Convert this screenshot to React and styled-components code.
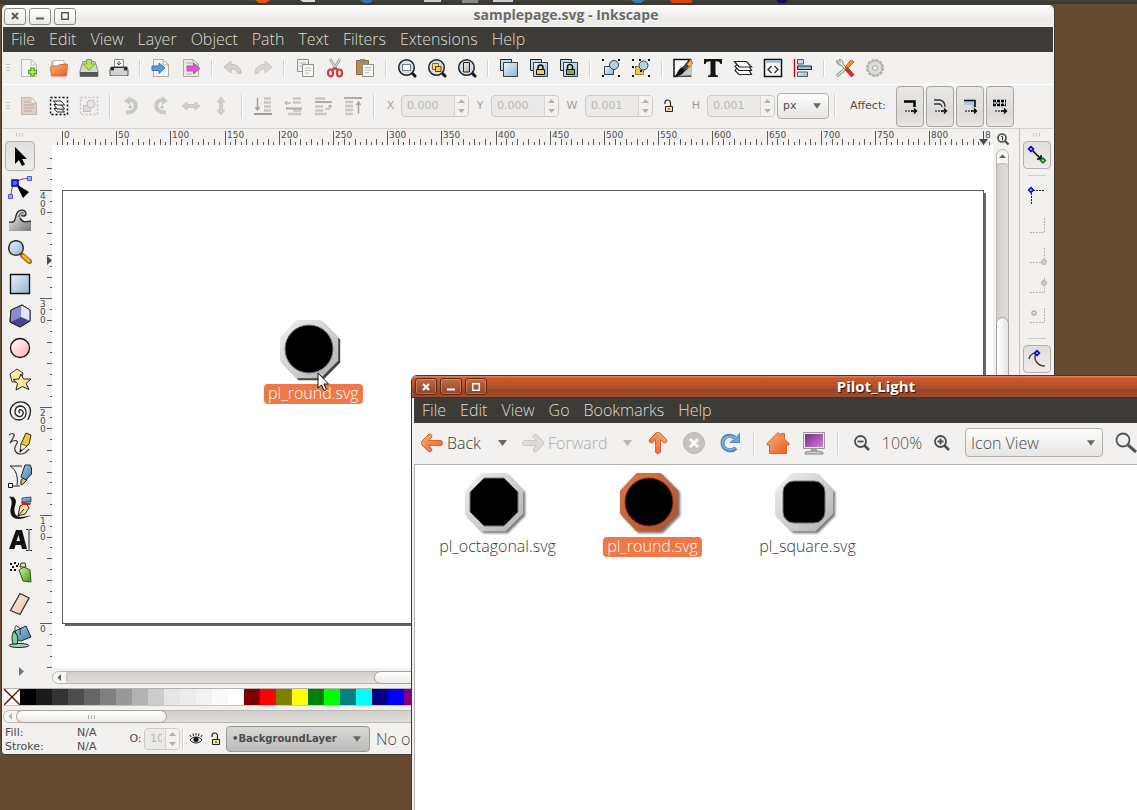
import React from "react";
import styled, { createGlobalStyle, css } from "styled-components";

const UI = `"Open Sans", "Noto Sans", sans-serif`;
const SMALL = `"DejaVu Sans", "Noto Sans", sans-serif`;

const Global = createGlobalStyle`
  *, *::before, *::after { box-sizing: border-box; }
  html, body, #root { height: 100%; }
  body { margin: 0; overflow: hidden; background: #654a32; font-family: ${UI}; color: #4c4c4c; }
  button, input, select { font: inherit; color: inherit; margin: 0; }
  svg { display: block; flex: none; }
`;

/* ---------- desktop ---------- */
const Desktop = styled.div`
  position: relative;
  height: 100vh;
  overflow: hidden;
  background: #654a32;
`;
const TopPanel = styled.header`
  height: 4px;
  overflow: hidden;
  background: linear-gradient(#44433e, #35342f);
`;
const HiddenDefs = styled.svg`
  position: absolute;
  width: 0;
  height: 0;
`;

/* ---------- windows ---------- */
const Window = styled.section`
  position: absolute;
  display: flex;
  flex-direction: column;
  background: #f2f1f0;
  border: 1px solid #3c3b37;
`;
const EditorWindow = styled(Window)`
  top: 4px;
  left: 1px;
  right: 82px;
  bottom: 55px;
  padding: 0 1px;
  border-radius: 6px 6px 4px 4px;
`;
const FilesWindow = styled(Window)`
  top: 375px;
  left: 411px;
  right: -126px;
  bottom: -40px;
  border-radius: 6px 6px 0 0;
`;
const TitleBar = styled.div`
  flex: none;
  display: flex;
  align-items: center;
  gap: 3px;
  height: 22px;
  padding-left: 1px;
  border-radius: 5px 5px 0 0;
  background: ${(p) => (p.$active
    ? "linear-gradient(#e98a61 0, #d2592c 2px, #a8502d 60%, #94452a 60%, #a34c2a)"
    : "linear-gradient(#fdfdfc, #efeeec 55%, #ebeae8 60%, #f0efed)")};
  ${(p) => p.$active && css`padding-left: 3px; border-bottom: 1px solid #5a2a17;`}
`;
const TitleButton = styled.button`
  display: grid;
  place-items: center;
  width: 22px;
  height: 17px;
  padding: 0;
  border-radius: 3px;
  border: 1px solid ${(p) => (p.$active ? "#5c2a16" : "#8b8a87")};
  background: ${(p) => (p.$active ? "linear-gradient(#c36a47, #8e4428)" : "linear-gradient(#fff, #ebeae8)")};
  color: ${(p) => (p.$active ? "#fff" : "#5c5b58")};
  box-shadow: inset 0 0 0 1px ${(p) => (p.$active ? "rgba(255,190,160,.35)" : "transparent")};
`;
const Title = styled.h1`
  flex: 1;
  margin: 0;
  padding-bottom: 2px;
  text-align: center;
  font: 700 ${(p) => (p.$active ? "15px" : "14px")}/20px ${UI};
  color: ${(p) => (p.$active ? "#fff" : "#6b6a67")};
  text-shadow: ${(p) => (p.$active ? "1px 1px 1px #2b1309" : "0 1px 0 #fff")};
`;
const MenuBar = styled.nav`
  flex: none;
  display: flex;
  align-items: center;
  gap: 14px;
  height: 25px;
  margin-left: ${(p) => p.$inset || "0"};
  padding-left: 8px;
  background: #3c3b37;
`;
const MenuItem = styled.button`
  padding: 0 0 2px;
  border: 0;
  background: none;
  color: #dfdbd2;
  font: 300 16px/22px ${UI};
`;

/* ---------- toolbars ---------- */
const CommandBar = styled.div`
  flex: none;
  display: flex;
  align-items: center;
  height: 33px;
  border-bottom: 1px solid #fff;
`;
const ControlBar = styled.div`
  flex: none;
  display: flex;
  align-items: center;
  height: 44px;
  padding-bottom: 1px;
  border-bottom: 1px solid #d5d1cd;
  font: 11px/14px ${SMALL};
`;
const Grip = styled.span`
  flex: none;
  width: ${(p) => (p.$vertical ? "8px" : "11px")};
  height: ${(p) => (p.$vertical ? "12px" : "8px")};
  background: ${(p) => (p.$vertical
    ? "repeating-linear-gradient(90deg, #c9c6c2 0 1px, transparent 1px 3px) center / 8px 4px no-repeat"
    : "repeating-linear-gradient(#c9c6c2 0 1px, transparent 1px 3px) 3px center / 4px 8px no-repeat")};
`;
const IconButton = styled.button`
  display: grid;
  place-items: center;
  flex: none;
  width: 30px;
  height: 30px;
  padding: 0;
  border: 0;
  background: none;
`;
const LockButton = styled(IconButton)`
  width: 32px;
`;
const Separator = styled.span`
  flex: none;
  width: ${(p) => (p.$narrow ? "6px" : "12px")};
  height: ${(p) => (p.$tall ? "24px" : "17px")};
  background: linear-gradient(90deg, #d6d3cf 1px, #fff 1px) center / 2px 100% no-repeat;
`;
const FieldLabel = styled.label`
  width: ${(p) => p.$w || "28px"};
  text-align: center;
  color: ${(p) => (p.$strong ? "#4c4c4c" : "#a3a09c")};
`;
const Spin = styled.span`
  display: flex;
  flex: none;
  width: ${(p) => p.$w || "68px"};
  height: 22px;
  border: 1px solid #cfccc8;
  border-radius: 4px;
  overflow: hidden;
  background: #ebeae8;
`;
const SpinInput = styled.input`
  flex: 1;
  min-width: 0;
  padding: 0 3px 0 5px;
  border: 0;
  border-right: 1px solid #d8d5d1;
  background: transparent;
  color: #bbb8b4;
`;
const SpinArrows = styled.span`
  display: grid;
  place-items: center;
  width: 13px;
  background: #f3f2f1;
`;
const SelectBox = styled.span`
  display: grid;
  align-items: center;
  flex: none;
  width: ${(p) => p.$w};
  height: ${(p) => p.$h};
  margin-left: ${(p) => p.$before || "0"};
  border: 1px solid ${(p) => (p.$dark ? "#9b9996" : "#b4b1ad")};
  border-radius: 4px;
  background: ${(p) => (p.$dark ? "linear-gradient(#d8d8d7, #bdbcbb)" : "linear-gradient(#fdfdfd, #e6e5e3)")};
  & > * { grid-area: 1 / 1; }
  & > svg { justify-self: end; margin-right: ${(p) => (p.$dark ? "8px" : "7px")}; pointer-events: none; }
`;
const Select = styled.select`
  appearance: none;
  width: 100%;
  height: 100%;
  padding: 0 0 0 5px;
  border: 0;
  background: none;
`;
const LayerSelect = styled(Select)`
  font: 800 10px/14px ${SMALL};
`;
const AffectLabel = styled.span`
  margin: 0 10px 0 9px;
`;
const AffectGroup = styled.div`
  display: flex;
  gap: 2px;
`;
const AffectButton = styled.button`
  display: grid;
  place-items: center;
  width: 28px;
  height: 41px;
  padding: 0;
  border: 1px solid #a8a5a1;
  border-radius: 4px;
  background: linear-gradient(#e9e8e6, #dddbd9 70%, #e8e7e5);
`;

/* ---------- editor body ---------- */
const EditorBody = styled.div`
  flex: 1;
  min-height: 0;
  display: grid;
  grid-template-columns: 37px 1fr 34px;
`;
const Column = styled.div`
  display: flex;
  flex-direction: column;
  align-items: center;
  min-height: 0;
`;
const ToolColumn = styled(Column)`
  padding-right: 4px;
`;
const ToolButton = styled.button`
  display: grid;
  place-items: center;
  flex: none;
  width: 30px;
  height: 30px;
  margin-bottom: 2px;
  padding: 0;
  border: 1px solid ${(p) => (p.$on ? "#b3b0ac" : "transparent")};
  border-radius: 4px;
  background: ${(p) => (p.$on ? "linear-gradient(#e0dfdd, #eeedec)" : "none")};
`;
const Expander = styled(ToolButton)`
  align-items: center;
  height: 38px;
`;
const SnapColumn = styled(Column)`
  border-left: 1px solid #c4c1bd;
`;
const SnapButton = styled(ToolButton)`
  width: 28px;
  height: ${(p) => (p.$on ? "28px" : "30px")};
  margin: 0;
`;
const SnapRule = styled.span`
  flex: none;
  width: 18px;
  height: ${(p) => p.$h};
  background: linear-gradient(#d0cdc9, #d0cdc9) center / 100% 1px no-repeat;
`;
const CanvasGrid = styled.div`
  display: grid;
  min-height: 0;
  grid-template-columns: 12px 1fr 26px;
  grid-template-rows: 16px 1fr 20px;
`;
const TopRuler = styled.svg`
  grid-area: 1 / 1 / 2 / 3;
  width: 100%;
  height: 16px;
`;
const SideRuler = styled.svg`
  grid-area: 2 / 1;
  width: 12px;
  height: 100%;
`;
const Canvas = styled.div`
  grid-area: 2 / 2;
  display: grid;
  padding: 45px 9px 44px 10px;
  background: #fff;
`;
const Page = styled.div`
  border: 1px solid #5a5a5a;
  background: #fff;
  box-shadow: 3px 3px 0 -1px #666, 2px 2px 0 #666;
  clip-path: polygon(0 0, 100% 0, 100% 3px, calc(100% + 3px) 3px, calc(100% + 3px) calc(100% + 3px), 3px calc(100% + 3px), 3px 100%, 0 100%);
`;
const ZoomCorner = styled.div`
  grid-area: 1 / 3;
  display: grid;
  place-items: center;
  padding: 4px 6px 0 0;
`;
const VScroll = styled.div`
  grid-area: 2 / 3;
  display: flex;
  flex-direction: column;
  width: 13px;
  margin: 4px 0 0 3px;
  border: 1px solid #bab7b3;
  border-radius: 7px 7px 0 0;
  background: linear-gradient(90deg, #d3d0cc, #e0dedb);
`;
const HScroll = styled.div`
  display: flex;
  height: 13px;
  border: 1px solid #bab7b3;
  border-radius: 7px 0 0 7px;
  background: linear-gradient(#d3d0cc, #e0dedb);
`;
const CanvasHScroll = styled(HScroll)`
  grid-area: 3 / 2 / 4 / 4;
  margin-top: 3px;
`;
const ScrollCap = styled.button`
  display: grid;
  place-items: center;
  flex: none;
  width: ${(p) => (p.$vertical ? "11px" : "13px")};
  height: ${(p) => (p.$vertical ? "13px" : "11px")};
  padding: 0;
  border: 0;
  border-radius: ${(p) => (p.$vertical ? "6px 6px 0 0" : "6px 0 0 6px")};
  background: #f7f6f5;
  color: ${(p) => (p.$dim ? "#b3b0ac" : "#5f5e5b")};
`;
const Trough = styled.span`
  flex: none;
  border: 0 solid #bab7b3;
  ${(p) => (p.$vertical
    ? css`height: 155px; border-top-width: 1px; border-radius: 6px 6px 0 0;`
    : css`width: 309px; border-left-width: 1px; border-radius: 6px 0 0 6px;`)}
`;
const Thumb = styled.span`
  display: grid;
  place-items: center;
  flex: ${(p) => (p.$size ? `0 0 ${p.$size}` : "1")};
  margin: -1px;
  border: 1px solid #a5a29e;
  border-radius: 7px;
  background: ${(p) => (p.$vertical ? "linear-gradient(90deg, #fff, #e6e5e3)" : "linear-gradient(#fff, #ebeae8)")};
`;

/* ---------- palette and status ---------- */
const Palette = styled.div`
  flex: none;
  display: flex;
  height: 18px;
  padding-left: 1px;
  border-top: 1px solid #b5b2ae;
  border-bottom: 1px solid #c8c5c1;
  overflow: hidden;
`;
const Swatch = styled.button`
  flex: none;
  width: 16px;
  height: 16px;
  padding: 0;
  border: 0;
  background: ${(p) => p.$c};
`;
const PaletteScroll = styled(HScroll)`
  flex: none;
  margin: 4px 0 1px;
`;
const StatusBar = styled.div`
  flex: none;
  display: flex;
  align-items: center;
  height: 30px;
  padding-left: 2px;
  font: 11px/14px ${SMALL};
`;
const StyleInfo = styled.dl`
  display: grid;
  grid-template-columns: 72px 50px;
  margin: 0;
  padding-top: 1px;
`;
const StyleName = styled.dt``;
const StyleValue = styled.dd`
  margin: 0;
`;
const StatusIcon = styled.button`
  display: grid;
  place-items: center;
  width: 20px;
  height: 20px;
  padding: 0;
  border: 0;
  background: none;
`;
const StatusText = styled.span`
  margin-left: 6px;
  font: 300 16px/20px ${UI};
  white-space: nowrap;
`;

/* ---------- file manager ---------- */
const FilesBody = styled.div`
  flex: 1;
  display: flex;
  flex-direction: column;
  margin-left: 2px;
`;
const FilesToolbar = styled.div`
  flex: none;
  display: flex;
  align-items: center;
  height: 41px;
  padding: 0 0 2px 7px;
  font: 300 16px/20px ${UI};
`;
const NavButton = styled.button`
  display: flex;
  align-items: center;
  gap: 4px;
  width: ${(p) => p.$w};
  padding: 0;
  border: 0;
  background: none;
  color: ${(p) => (p.disabled ? "#aeaba7" : "#3c3b37")};
`;
const DropButton = styled.button`
  display: grid;
  place-items: center;
  width: 22px;
  height: 30px;
  margin-right: ${(p) => (p.disabled ? "2px" : "9px")};
  padding: 0;
  border: 0;
  background: none;
`;
const WideIconButton = styled(IconButton)`
  width: 36px;
`;
const ZoomValue = styled.span`
  width: 44px;
  text-align: center;
`;
const SearchButton = styled(IconButton)`
  margin-left: 8px;
`;
const IconPane = styled.ul`
  flex: 1;
  display: grid;
  grid-template-columns: repeat(auto-fill, 155px);
  align-content: start;
  margin: 0;
  padding: 8px 0 0 5px;
  list-style: none;
  border: solid #b5b2ae;
  border-width: 1px 0 0 1px;
  background: #fff;
`;
const FileItem = styled.li`
  display: flex;
  flex-direction: column;
  align-items: center;
`;
const FileName = styled.span`
  padding: 0 4px 2px;
  border-radius: 4px;
  font: 300 16px/18px ${UI};
  color: ${(p) => (p.$on ? "#fff" : "#3c3b37")};
  background: ${(p) => (p.$on ? "#f07746" : "transparent")};
`;
const DraggedFile = styled.div`
  position: absolute;
  left: 264px;
  top: 320px;
  display: flex;
  flex-direction: column;
  align-items: center;
`;
const Pointer = styled.svg`
  position: absolute;
  left: 317px;
  top: 372px;
`;

/* ---------- drawings ---------- */
const Defs = () => (
  <HiddenDefs aria-hidden="true">
    <defs>
      {[
        ["blue", "#eef5fb", "#8fb2d3"], ["pink", "#fff", "#fbaab4"], ["orange", "#f9b47c", "#e8591c"],
        ["yellow", "#fff7c4", "#f4e27a"], ["silver", "#f2f2f2", "#b0b0b0"], ["copper", "#e0774a", "#a9502c"],
        ["gray", "#f4f4f4", "#777"], ["purple", "#7a2b8c", "#d07ad8"], ["steel", "#a8cbe4", "#3f7db3"],
        ["green", "#d7f5a8", "#3e9413"], ["skin", "#fdeee8", "#f6bfa8"],
      ].map(([id, a, b]) => (
        <linearGradient key={id} id={id} x1="0" y1="0" x2="1" y2="1">
          <stop offset="0" stopColor={a} /><stop offset="1" stopColor={b} />
        </linearGradient>
      ))}
      <filter id="soft" x="-20%" y="-20%" width="150%" height="150%"><feGaussianBlur stdDeviation="1" /></filter>
    </defs>
  </HiddenDefs>
);

const Svg = ({ s = 20, children, ...rest }) => (
  <svg width={s} height={s} viewBox={`0 0 ${s} ${s}`} fill="none" aria-hidden="true" {...rest}>{children}</svg>
);

const Caret = ({ w = 9, color = "#6b6966" }) => (
  <svg width={w} height="6" viewBox="0 0 9 6" aria-hidden="true"><path d="M0 0H9L4.5 6Z" fill={color} /></svg>
);
const SpinMarks = () => (
  <svg width="7" height="14" viewBox="0 0 7 14" fill="#b5b2ae" aria-hidden="true"><path d="M0 4L3.5 0 7 4ZM0 10L3.5 14 7 10Z" /></svg>
);
const CloseMark = () => <Svg s={10}><path d="M2 2L8 8M8 2L2 8" stroke="currentColor" strokeWidth="2" /></Svg>;
const MinMark = () => <Svg s={10}><path d="M1 7.5H9" stroke="currentColor" strokeWidth="2" /></Svg>;
const MaxMark = () => <Svg s={10}><path d="M1.7 1.7H8.3V8.3H1.7Z" stroke="currentColor" strokeWidth="1.5" /></Svg>;

const Sheet = ({ fill = "#f6f6f5", stroke = "#a9a9a6" }) => (
  <>
    <path d="M2.5 1.5H12L17.5 7V18.5H2.5Z" fill={fill} stroke={stroke} />
    <path d="M12 1.5V7H17.5Z" fill="#fff" stroke={stroke} />
  </>
);
const Lens = ({ children }) => (
  <>
    <path d="M14.5 14.5L18 18" stroke="#111" strokeWidth="3" strokeLinecap="round" />
    <circle cx="9.5" cy="9.5" r="7.8" fill="#d3e0ec" stroke="#222" strokeWidth="1.5" />
    {children}
  </>
);
const Stack = ({ children }) => (
  <>
    <path d="M1.5 1.5H12.5V12.5H1.5Z" fill="#c7dbec" stroke="#222" />
    <path d="M4.500 4.500H18.500V18.500H4.500Z" fill="url(#blue)" stroke="#33414d" />
    {children}
  </>
);
const Padlock = ({ open }) => (
  <>
    <path d={open ? "M8.500 11V9.500A2.500 2.500 0 0 1 13.500 8.500V11" : "M9 12V9.500A2.500 2.500 0 0 1 14 9.500V12"} stroke="#111" strokeWidth="1.500" />
    <path d="M7.500 11.500H15.500V16.500H7.500Z" fill={open ? "#7fae45" : "#f5c74b"} stroke="#111" />
  </>
);
const Corners = () => (
  <path d="M1 1H3V3H1ZM17 1H19V3H17ZM1 17H3V19H1ZM17 17H19V19H17Z" fill="#111" />
);

const ICONS = {
  "New": <><Sheet fill="#f3f3f1" stroke="#bdbdba" /><path d="M13.500 9.500V18.500M9 14H18" stroke="#5f9f1c" strokeWidth="4.500" /><path d="M13.500 10.500V17.500M10 14H17" stroke="#b5e35d" strokeWidth="2" /></>,
  "Open": <><path d="M2 3H8L9 5H18V17H2Z" fill="#c9c6c2" /><path d="M4 2.500H15V10H4Z" fill="#fff" stroke="#b3b0ac" /><path d="M1.500 9L3 8H9L11 6.500H18.500L17.500 18H2.500Z" fill="url(#orange)" stroke="#dd6f3a" /></>,
  "Save": <><path d="M4 3.500H16L19 13V18.500H1V13Z" fill="#d5d5d3" stroke="#8a8a88" /><path d="M1 14H19V18.500H1Z" fill="#555753" /><path d="M7.500 1.500H12.500V6H16L10 12.500 4 6H7.500Z" fill="#b4e254" stroke="#74ab2a" /></>,
  "Print": <><path d="M5.500 1.500H14.500V10H5.500Z" fill="#fafafa" stroke="#8a8a88" /><path d="M2 9H18L19 12V17.500H1V12Z" fill="#d3d3d1" stroke="#555753" /><path d="M2 9H18V12.500H15V10H5V12.500H2Z" fill="#2e302c" /><path d="M2 17.500H18" stroke="#8a8a88" /><path d="M10 3V7M8 5L10 7 12 5" stroke="#555" /></>,
  "Import": <><Sheet /><path d="M1 8H8V5L14 10 8 15.500V12.500H1Z" fill="#5a9bd5" stroke="#3a74ad" /></>,
  "Export": <><Sheet fill="#efe9e4" /><path d="M5 5H11M5 8H9M5 16H11" stroke="#c7a99a" /><path d="M6 8H12.500V5L19 10.500 12.500 16V13H6Z" fill="#d957cf" stroke="#b85ab3" /></>,
  "Undo": <path d="M1 9L8 3V6.500C14 6.500 18 9 18 15.500H14.500C14.500 12.500 12 11 8 11V15Z" fill="#d5d3d0" stroke="#c3c0bc" />,
  "Redo": <path d="M19 9L12 3V6.500C6 6.500 2 9 2 15.500H5.500C5.500 12.500 8 11 12 11V15Z" fill="#d9d7d4" stroke="#cbc8c5" />,
  "Copy": <><path d="M2.500 1.500H13.500V13.500H2.500Z" fill="#eee" stroke="#8f8f8c" /><path d="M4.500 5H11M4.500 8H8" stroke="#bbb" /><path d="M7.500 6.500H18.500V18.500H7.500Z" fill="#f6f6f5" stroke="#8f8f8c" /><path d="M10 10H16M10 12.500H16M10 15H14" stroke="#bbb" /></>,
  "Cut": <><path d="M5 1L12 12M15 1L8 12" stroke="#999" strokeWidth="2.500" /><path d="M5 1L12 12M15 1L8 12" stroke="#e8e8e6" /><ellipse cx="5.500" cy="15" rx="2.500" ry="3.500" stroke="#cf3a3f" strokeWidth="2.200" /><ellipse cx="14.500" cy="15" rx="2.500" ry="3.500" stroke="#cf3a3f" strokeWidth="2.200" /><path d="M7 12L10 10 13 12" stroke="#cf3a3f" strokeWidth="2" /></>,
  "Paste": <><path d="M1.500 2.500H13.500V16.500H1.500Z" fill="#b98d52" stroke="#8f6a35" /><path d="M5 1H10V4.500H5Z" fill="#888a85" /><path d="M7.500 6.500H18.500V18.500H7.500Z" fill="#f6f6f5" stroke="#8f8f8c" /><path d="M10 9.500H16M10 12H16M10 14.500H14" stroke="#bbb" /></>,
  "Zoom selection": <Lens><path d="M5.500 6.500H13.500V12.500H5.500Z" fill="#fff" stroke="#111" strokeDasharray="1 1" /></Lens>,
  "Zoom drawing": <Lens><path d="M5.500 5.500H11.500V11.500H5.500Z" fill="#f7df8d" stroke="#8d6a12" /><path d="M8.500 8.500H14V13.500H8.500Z" fill="#f9c34b" stroke="#5d4207" /></Lens>,
  "Zoom page": <Lens><path d="M6.500 4.500H12.500V14H6.500Z" fill="url(#silver)" stroke="#222" /></Lens>,
  "Duplicate": <Stack />,
  "Clone": <Stack><Padlock /></Stack>,
  "Unlink clone": <Stack><Padlock open /></Stack>,
  "Group": <><Corners /><path d="M3.500 8.500H12.500V16.500H3.500Z" fill="url(#blue)" stroke="#33414d" /><circle cx="13" cy="7" r="4.500" fill="#b9d0e6" stroke="#33414d" /></>,
  "Ungroup": <><Corners /><path d="M4.500 8.500H12.500V16.500H4.500Z" fill="#f4c542" stroke="#6e520c" strokeDasharray="2 1" /><circle cx="12.500" cy="7.500" r="4.500" fill="#b9d0e6" stroke="#33414d" /><path d="M8 1H10V3H8ZM1 8H3V10H1ZM9 12H11V14H9Z" fill="#111" /></>,
  "Fill and stroke": <><path d="M1 1.500H17L3 18.500 1 18.500Z" fill="#fff" stroke="#111" strokeWidth="1.500" /><path d="M1 19C4 18 5 11 9 9.500L12 12C10 16 8 18 4 18.500H18V8" fill="#111" stroke="#111" strokeWidth="0.500" /><path d="M4 18L18 17.500V8L12 13Z" fill="#c9c9c9" /><path d="M2 18.500C6 17 5 11 9 9.500L12 12C10 16 8 18 2 18.500Z" fill="#111" /><path d="M9.500 9.500L15 4 17.500 6.500 12 12.500Z" fill="#444" /><path d="M14 6L18 1 19.500 6 16 9Z" fill="#f6b32e" stroke="#7b5410" strokeWidth="0.700" /></>,
  "Text and font": <path d="M1 1H19V6H17.500C17 4 15.500 3.300 12.500 3.300V15.500C12.500 17 13.500 17.500 15 17.500V19H5V17.500C6.500 17.500 7.500 17 7.500 15.500V3.300C4.500 3.300 3 4 2.500 6H1Z" fill="#151515" />,
  "Layers": <g stroke="#222" strokeWidth="1.200" fill="#fff"><path d="M2 12.500L4 10H15L18.500 16.500H6Z" /><path d="M2 8.500L4 6.500H15L18.500 12.500H6Z" /><path d="M1.500 3.500H13.500L18.500 9H6Z" /></g>,
  "XML editor": <><path d="M1.500 1.500H18.500V18.500H1.500Z" fill="#f7f7f7" stroke="#111" strokeWidth="1.500" /><path d="M2 3.500H18" stroke="#9dbcd9" strokeWidth="2.500" /><path d="M8.500 8L5 11.500 8.500 15M11.500 8L15 11.500 11.500 15" stroke="#222" strokeWidth="1.200" /></>,
  "Align": <><path d="M1.500 1V19" stroke="#d40000" strokeWidth="1.400" /><path d="M4.500 1.500H10.500V6H4.500Z" fill="#c6d9ea" stroke="#4a5a68" /><path d="M4.500 8H18.500V11.500H4.500Z" fill="#9cbbd8" stroke="#222" /><path d="M4.500 14H14.500V18.500H4.500Z" fill="url(#blue)" stroke="#4a5a68" /></>,
  "Preferences": <><path d="M2 2C1 5 3 7.500 6 7L15.500 18 18 16 8 6C8.500 3 6.500 1 4 1.500L5.500 4 4 5.500Z" fill="#e6e6e4" stroke="#8d8d8a" /><path d="M10 9L16 2 19 4 12 11Z" fill="#f2952b" stroke="#bd6310" /><path d="M10 11L2 18" stroke="#8d8d8a" strokeWidth="3" /><path d="M10 11L2.500 17.500" stroke="#e6e6e4" strokeWidth="1.500" /><path d="M11 10L18 18" stroke="#cc2f27" strokeWidth="4" /></>,
  "Document": <><circle cx="10" cy="10" r="8" fill="#e4e3e2" stroke="#b3b1ae" strokeWidth="2" strokeDasharray="3 1.200" /><circle cx="10" cy="10" r="7" fill="#dfdedc" stroke="#b3b1ae" /><circle cx="10" cy="10" r="2.500" fill="#f2f1f0" stroke="#a8a6a3" /></>,
  "Select all": <><Sheet fill="#dfd0c8" stroke="#c4b8b1" /><path d="M5 6H11M5 9H15M5 12H15M5 15H13" stroke="#bfa598" /></>,
  "Select in layers": <><path d="M1.500 1.500H18.500V18.500H1.500Z" stroke="#000" strokeWidth="1.500" strokeDasharray="2 2" /><g stroke="#222" fill="#fff"><path d="M5 12.500H12L15.500 16H8Z" /><path d="M5 8.500H12L15.500 13H8Z" /><path d="M4.500 5H12L15.500 9H8Z" /></g></>,
  "Deselect": <g stroke="#c3c1be"><path d="M1.500 1.500H18.500V18.500H1.500Z" strokeDasharray="2 2" strokeWidth="1.500" /><path d="M4.500 9.500H11.500V15.500H4.500Z" fill="#dddcda" /><circle cx="12" cy="8" r="4" fill="#e6e5e3" /></g>,
  "Rotate left": <><path d="M8 4C17 3 18 17 5 16.500" stroke="#cbc9c6" strokeWidth="4" /><path d="M9 0L3 5 9 9Z" fill="#cbc9c6" /><circle cx="9" cy="11" r="1.500" fill="#bbb" /></>,
  "Rotate right": <><path d="M12 4C3 3 2 17 15 16.500" stroke="#cbc9c6" strokeWidth="4" /><path d="M11 0L17 5 11 9Z" fill="#cbc9c6" /><circle cx="11" cy="11" r="1.500" fill="#bbb" /></>,
  "Flip horizontal": <path d="M1 10L6 6V8.500H14V6L19 10 14 14V11.500H6V14Z" fill="#d2d0cd" stroke="#cbc8c5" />,
  "Flip vertical": <path d="M10 1L14 6H11.500V14H14L10 19 6 14H8.500V6H6Z" fill="#d2d0cd" stroke="#cbc8c5" />,
  "Lower to bottom": <><path d="M1 18H19" stroke="#a19f9c" strokeWidth="2" /><path d="M4.500 2V14M2.500 11L4.500 14 6.500 11" stroke="#a19f9c" strokeWidth="1.400" /><path d="M11 2.500H18M11 6.500H18M11 10.500H18M11 14.500H18" stroke="#c9c7c4" strokeWidth="2.500" /></>,
  "Lower": <><path d="M10 2.500H18M10 6.500H18M10 14.500H18M5 18H18" stroke="#c9c7c4" strokeWidth="2.500" /><path d="M3 12.500H19" stroke="#aeacaa" strokeWidth="2" /><path d="M8 7H2M4 5L2 7 4 9" stroke="#a5a3a0" /></>,
  "Raise": <><path d="M2 2.500H12M2 10.500H10M2 14.500H10M2 18H14" stroke="#c9c7c4" strokeWidth="2.500" /><path d="M2 6H19" stroke="#aeacaa" strokeWidth="2" /><path d="M12 13H17V9M15 11L17 9 19 11" stroke="#a5a3a0" /></>,
  "Raise to top": <><path d="M1 2H19" stroke="#aeacaa" strokeWidth="2" /><path d="M15.500 18V6M13.500 9L15.500 6 17.500 9" stroke="#a5a3a0" strokeWidth="1.400" /><path d="M2 6H10M2 10H10M2 14H10M2 18H10" stroke="#c9c7c4" strokeWidth="2.500" /></>,
};

const COMMANDS = [
  ["New", "Open", "Save", "Print"], ["Import", "Export"], ["Undo", "Redo"], ["Copy", "Cut", "Paste"],
  ["Zoom selection", "Zoom drawing", "Zoom page"], ["Duplicate", "Clone", "Unlink clone"], ["Group", "Ungroup"],
  ["Fill and stroke", "Text and font", "Layers", "XML editor", "Align"], ["Preferences", "Document"],
];
const CONTROLS = [
  ["Select all", "Select in layers", "Deselect"],
  ["Rotate left", "Rotate right", "Flip horizontal", "Flip vertical"],
  ["Lower to bottom", "Lower", "Raise", "Raise to top"],
];

const TOOLS = {
  "Select": <path d="M7 3V20L11 16 14 22 17 20.500 14 15H19Z" fill="#000" />,
  "Edit paths": <><path d="M3 20C3 9 8 2 21 2.500" stroke="#555" /><g fill="#a9a9ff" stroke="#4b4bff"><path d="M0.500 18.500H4.500V22.500H0.500Z" /><path d="M19.500 0.500H23.500V4.500H19.500Z" /></g><path d="M4 4H10V10H4Z" fill="#5b5bff" stroke="#0000c8" strokeWidth="1.500" /><path d="M8 8L21 16 15 22Z" fill="#000" /></>,
  "Tweak": <><path d="M1 14C7 15 7 12 8 8 9 1 18 0 18 6 18 8 15 9 13.500 7 14 14 18 14 23 13V23H1Z" fill="url(#gray)" /><path d="M1 14C7 15 7 12 8 8 9 1 18 0 18 6 18 8 15 9 13.500 7M12 10C14 15 18 14 23 13" stroke="#222" strokeWidth="1.300" /><path d="M11 9C11 6 13 4 15.500 5" stroke="#333" /></>,
  "Zoom": <><path d="M14.500 15.500L21.500 21.500" stroke="#a8690d" strokeWidth="5" strokeLinecap="round" /><path d="M15.500 16L21 21" stroke="#fbb62d" strokeWidth="3" strokeLinecap="round" /><circle cx="8" cy="8" r="7.300" fill="url(#blue)" stroke="#333" strokeWidth="1.500" /></>,
  "Rectangle": <path d="M2.500 2.500H21.500V21.500H2.500Z" fill="url(#blue)" stroke="#111" strokeWidth="1.400" />,
  "3D box": <><path d="M3 6L14 1 22 6V17L12 23 2 18Z" fill="#c6c6ea" stroke="#222" /><path d="M3 6L13 1V13L3 18Z" fill="#8d8dc9" /><path d="M14 1L22 6V17L13 13Z" fill="#e6e6fa" /><path d="M2.500 18L13 13 22 17 12 23Z" fill="#45458f" /><path d="M3 6L14 1 22 6V17L12 23 2 18Z" stroke="#222" /></>,
  "Ellipse": <circle cx="12" cy="12" r="9.500" fill="url(#pink)" stroke="#111" strokeWidth="1.300" />,
  "Star": <><path d="M2 6L9 1 15 5 13 14H4Z" fill="url(#yellow)" stroke="#333" /><path d="M13 6L15.500 11 23 11 18 15.500 21 21.500 14.500 18.500 8 22 9.500 15.500 5 11.500 11 11Z" fill="url(#yellow)" stroke="#222" /></>,
  "Spiral": <path d="M12 13C10 12 11 9 13.500 10 17 12 14.500 17 11 16.500 5 15 6 6 13 6 20 7 20 19 11.500 20 2 20 0 10 5 5 11-1 22 2 22.500 11 22.500 16 20 19 20 20" stroke="#222" strokeWidth="1.300" />,
  "Pencil": <><path d="M1 3C5 0 8 2 5 6L2 11C6 7 12 8 8 13 5 18 8 22 13 22 18 22 19 19 21 17" stroke="#333" strokeWidth="1.200" /><path d="M12 20L13 12 18 1 23 3 21 12Z" fill="#f8c33c" stroke="#3a2a08" /><path d="M12 20L13 12 19 14Z" fill="#fff6d2" stroke="#333" strokeWidth="0.700" /><path d="M12 20.500V17L14.500 18Z" fill="#000" /></>,
  "Bezier": <><path d="M2 2H14M2 2C9 6 10 14 9 21M3 22H12" stroke="#222" /><path d="M0.500 19.500H4.500V23.500H0.500Z" fill="#fff" stroke="#111" /><path d="M13 21V16L17 13 19 16 15 20Z" fill="#f8c33c" stroke="#222" /><path d="M13 13L17 1 22 1 23.500 4V10L18 16Z" fill="url(#steel)" stroke="#223" /></>,
  "Calligraphy": <><path d="M1 1C8 0 9 5 7 10 5 17 8 21 13 21 17 21 20 19 23 20 19 20 17 23 11 23 4 23 1 18 3 11 4 6 4 3 1 1Z" fill="#111" /><path d="M10 20L12 10 18 7 21 12 17 18Z" fill="#f9dd90" stroke="#222" /><path d="M10 20L16 13" stroke="#222" /><path d="M13 6L23 7 22 9H14Z" fill="#cc1b1b" /><path d="M14 2L23 1V6H14Z" fill="url(#steel)" stroke="#223" strokeWidth="0.700" /></>,
  "Text": <><path d="M1 21L8 2H14L19 21H14L13 17H7.500L6.500 21ZM8.500 13H12L10.500 7Z" fill="#111" fillRule="evenodd" /><path d="M18 1.500H20.500M21.500 1.500H24M21 2V22M18 22.500H20.500M21.500 22.500H24" stroke="#222" /></>,
  "Spray": <><path d="M11 10L16 7 22 10 23 22 15 21Z" fill="url(#green)" stroke="#2d5a12" /><path d="M12 7L13 3 17 3 18 7Z" fill="#e9e2b6" stroke="#333" /><path d="M2 3H4V5H2ZM6 2H8V4H6ZM4 6H6V8H4ZM8 5H10V7H8ZM2 9H4V11H2ZM6 9H8V11H6ZM10 3H11V5H10Z" fill="#111" /></>,
  "Eraser": <path d="M12 1.500L21 6 12 22.500 2.500 18.500Z" fill="url(#skin)" stroke="#333" strokeWidth="1.300" />,
  "Bucket": <><ellipse cx="11" cy="21.500" rx="10" ry="2" fill="#9fdcb0" stroke="#222" /><path d="M5 8L18 2 23 13 13 17C9 17 6 13 5 8Z" fill="url(#steel)" stroke="#222" /><path d="M6 7C3 12 4 16 5 20H9C10 18 10 14 9 11Z" fill="#7fd196" stroke="#222" /><path d="M8 10C6 4 7 1 9 2 12 3 13 7 12 11" stroke="#222" /></>,
};

const AFFECT = {
  "Scale stroke": <path d="M4 5.500H14.500V11" stroke="#000" strokeWidth="2.500" />,
  "Scale corners": <path d="M4 4H10C14 5 15 8 15 11M4 8H9C11 8 12 10 12 11" stroke="#333" strokeWidth="1.300" />,
  "Move gradients": <><path d="M4 4H15.500V12H12V9H4Z" fill="#a9c8e4" /><path d="M4 4.500H15V11" stroke="#000" strokeWidth="1.500" /></>,
  "Move patterns": <><path d="M3 5H16M3 9H16" stroke="#000" strokeWidth="2.500" strokeDasharray="3 1" /><path d="M3 7H16M15 9V12" stroke="#000" strokeDasharray="1 2" /></>,
};

const DashCorner = ({ flip, color = "#b5b3b0" }) => (
  <path d={flip ? "M4.500 18V4.500H18" : "M3 16.500H17.500V2"} stroke={color} strokeDasharray="2 1" />
);
const SNAPS = {
  "Snap bounding boxes": <><DashCorner flip color="#222" /><path d="M4 1.500L6.500 4 4 6.500 1.500 4Z" fill="#8c9bff" stroke="#0000d4" strokeWidth="1.300" /></>,
  "Snap edges": <DashCorner />,
  "Snap corners": <><DashCorner /><circle cx="17" cy="16" r="2.500" fill="#cfcdca" stroke="#b5b3b0" /></>,
  "Snap edge midpoints": <><DashCorner /><circle cx="17" cy="7" r="2.500" fill="#cfcdca" stroke="#b5b3b0" /></>,
  "Snap centers": <><DashCorner /><circle cx="7" cy="7" r="2" fill="#e3e2e0" stroke="#b5b3b0" strokeWidth="1.500" /></>,
};

const SWATCHES = [
  "#000", "#1a1a1a", "#333", "#4d4d4d", "#666", "#808080", "#999", "#b3b3b3", "#ccc", "#e6e6e6", "#ececec", "#f2f2f2",
  "#f9f9f9", "#fff", "#800000", "#f00", "#808000", "#ff0", "#008000", "#0f0", "#008080", "#0ff", "#000080", "#00f",
  "#800080", "#f0f",
];

const range = (a, b) => Array.from({ length: b - a + 1 }, (_, i) => a + i);

function HorizontalRuler() {
  return (
    <TopRuler aria-hidden="true">
      {range(-1, 171).map((i) => {
        const x = Math.round(22 + i * 5.42);
        const top = i % 10 === 0 ? 2 : i % 2 === 0 ? 10 : 13;
        return <rect key={i} x={x} y={top} width="1" height={16 - top} fill="#5c5b58" />;
      })}
      {range(0, 16).map((i) => (
        <text key={i} x={Math.round(22 + i * 54.2) + 2} y="9" fontSize="9" fontFamily={SMALL} fill="#4c4c4c">{i * 50}</text>
      ))}
      <rect x="943" y="2" width="1" height="14" fill="#4c4c4c" />
      <text x="945" y="9" fontSize="9" fontFamily={SMALL} fill="#4c4c4c">8</text>
      <path d="M939 10H948L943.500 16Z" fill="#4c4c4c" />
    </TopRuler>
  );
}

function VerticalRuler() {
  return (
    <SideRuler aria-hidden="true">
      {range(-3, 44).map((i) => {
        const y = Math.round(45 + i * 10.83);
        const w = i % 10 === 0 ? 12 : i % 2 === 0 ? 5 : 2;
        return <rect key={i} x={12 - w} y={y} width={w} height="1" fill="#5c5b58" />;
      })}
      {range(0, 4).map((i) =>
        String((4 - i) * 100).split("").map((d, n) => (
          <text key={`${i}${n}`} x="0" y={Math.round(45 + i * 108.3) + 9 + n * 8} fontSize="9" fontFamily={SMALL} fill="#4c4c4c">{d}</text>
        ))
      )}
      <path d="M7 111L12 115.500 7 120Z" fill="#4c4c4c" />
    </SideRuler>
  );
}

function PilotLight({ shape, hot, hard }) {
  const body = "M17 0H42L60 18V42L42 60H17L0 42V18Z";
  return (
    <svg width="66" height="64" viewBox="0 0 66 64" aria-hidden="true">
      <path d={body} transform="translate(2 2) scale(.97)" fill={hard ? "#444" : "#777"} filter={hard ? undefined : "url(#soft)"} />
      <path d={body} transform="scale(.97)" fill={hot ? "url(#copper)" : "url(#silver)"} />
      {shape === "round" && <circle cx="29" cy="29" r="24" fill="#000" stroke={hot ? "#7d3517" : "#777"} />}
      {shape === "octagonal" && <path d="M19 5H39L53 19V39L39 53H19L5 39V19Z" fill="#000" stroke="#777" />}
      {shape === "square" && <rect x="8" y="8" width="42" height="42" rx="11" fill="#000" stroke="#777" />}
    </svg>
  );
}

function SpinField({ id, label, value, labelWidth, width }) {
  return (
    <>
      <FieldLabel htmlFor={id} $w={labelWidth} $strong={label === "O:"}>{label}</FieldLabel>
      <Spin $w={width}>
        <SpinInput id={id} defaultValue={value} disabled />
        <SpinArrows><SpinMarks /></SpinArrows>
      </Spin>
    </>
  );
}

function WindowTitle({ children, active }) {
  return (
    <TitleBar $active={active}>
      <TitleButton $active={active} aria-label="Close"><CloseMark /></TitleButton>
      <TitleButton $active={active} aria-label="Minimize"><MinMark /></TitleButton>
      <TitleButton $active={active} aria-label="Maximize"><MaxMark /></TitleButton>
      <Title $active={active}>{children}</Title>
    </TitleBar>
  );
}

const IconGroups = ({ groups, tall }) =>
  groups.map((group, g) => (
    <React.Fragment key={g}>
      {g > 0 && <Separator $tall={tall} />}
      {group.map((name) => (
        <IconButton key={name} aria-label={name}><Svg>{ICONS[name]}</Svg></IconButton>
      ))}
    </React.Fragment>
  ));

const SmallLock = () => (
  <Svg s={14}>
    <path d="M3 5V4A2.500 2.500 0 0 1 8.500 3.500V7" stroke="#222" strokeWidth="1.200" />
    <path d="M3.500 7.500H10.500V12.500H3.500Z" fill="#f3e58c" stroke="#222" />
    <path d="M7 9V11" stroke="#222" />
  </Svg>
);

function Editor() {
  return (
    <EditorWindow aria-label="Inkscape">
      <WindowTitle>samplepage.svg - Inkscape</WindowTitle>
      <MenuBar>
        {["File", "Edit", "View", "Layer", "Object", "Path", "Text", "Filters", "Extensions", "Help"].map((m) => (
          <MenuItem key={m}>{m}</MenuItem>
        ))}
      </MenuBar>
      <CommandBar><Grip /><IconGroups groups={COMMANDS} /></CommandBar>
      <ControlBar>
        <Grip />
        <IconGroups groups={CONTROLS} tall />
        <Separator $tall />
        <SpinField id="x" label="X" value="0.000" labelWidth="21px" />
        <SpinField id="y" label="Y" value="0.000" labelWidth="22px" />
        <SpinField id="w" label="W" value="0.001" labelWidth="26px" />
        <LockButton aria-label="Lock ratio"><SmallLock /></LockButton>
        <SpinField id="h" label="H" value="0.001" labelWidth="22px" />
        <SelectBox $w="52px" $h="26px" $before="2px">
          <Select aria-label="Unit" defaultValue="px"><option>px</option></Select>
          <Caret w={8} />
        </SelectBox>
        <Separator $tall />
        <AffectLabel>Affect:</AffectLabel>
        <AffectGroup>
          {Object.keys(AFFECT).map((name) => (
            <AffectButton key={name} aria-label={name}>
              <Svg>{AFFECT[name]}<path d="M5 15H12" stroke="#000" strokeDasharray="2 1" /><path d="M11 15H16M14 12.500L16.500 15 14 17.500" stroke="#000" strokeWidth="1.300" /></Svg>
            </AffectButton>
          ))}
        </AffectGroup>
      </ControlBar>
      <EditorBody>
        <ToolColumn>
          <Grip $vertical />
          {Object.keys(TOOLS).map((name) => (
            <ToolButton key={name} $on={name === "Select"} aria-label={name}><Svg s={24}>{TOOLS[name]}</Svg></ToolButton>
          ))}
          <Expander aria-label="More tools"><Svg s={14}><path d="M6 2L11 6.500 6 11Z" fill="#777" /></Svg></Expander>
        </ToolColumn>
        <CanvasGrid>
          <HorizontalRuler />
          <ZoomCorner>
            <Svg s={12}><circle cx="5" cy="5" r="4" stroke="#4c4c4c" strokeWidth="1.600" /><path d="M8 8L11.500 11.500" stroke="#4c4c4c" strokeWidth="2" /><path d="M4 4L5.500 3V7.500" stroke="#4c4c4c" /></Svg>
          </ZoomCorner>
          <VerticalRuler />
          <Canvas><Page /></Canvas>
          <VScroll>
            <ScrollCap $vertical aria-label="Scroll up"><Svg s={7}><path d="M0 5L3.500 1.500 7 5Z" fill="currentColor" /></Svg></ScrollCap>
            <Trough $vertical />
            <Thumb $vertical />
          </VScroll>
          <CanvasHScroll>
            <ScrollCap aria-label="Scroll left"><Svg s={7}><path d="M5 0L1.500 3.500 5 7Z" fill="currentColor" /></Svg></ScrollCap>
            <Trough />
            <Thumb />
          </CanvasHScroll>
        </CanvasGrid>
        <SnapColumn>
          <Grip $vertical />
          <SnapButton $on aria-label="Enable snapping">
            <Svg><path d="M5 5L14 14M14 10V14H10" stroke="#000" strokeWidth="1.500" /><path d="M4 1.500L6.500 4 4 6.500 1.500 4Z" fill="#a9b4ff" stroke="#0000d4" strokeWidth="1.500" /><path d="M16 13L18.500 15.500 16 18 13.500 15.500Z" fill="#8fd3a0" stroke="#0b7a22" strokeWidth="1.500" /></Svg>
          </SnapButton>
          <SnapRule $h="12px" />
          {Object.keys(SNAPS).map((name) => (
            <SnapButton key={name} aria-label={name}><Svg>{SNAPS[name]}</Svg></SnapButton>
          ))}
          <SnapRule $h="14px" />
          <SnapButton $on aria-label="Snap nodes">
            <Svg><path d="M2 10C3 6 6 4 9 4C6 10 10 17 18 17" stroke="#444" strokeWidth="1.400" /><path d="M10 1.500L12.500 4 10 6.500 7.500 4Z" fill="#8c9bff" stroke="#0000d4" strokeWidth="1.500" /></Svg>
          </SnapButton>
        </SnapColumn>
      </EditorBody>
      <Palette>
        <Swatch $c="#fff" aria-label="None"><Svg s={16}><path d="M0 0L16 16M16 0L0 16" stroke="#800000" strokeWidth="1.400" /></Svg></Swatch>
        {SWATCHES.map((c) => <Swatch key={c} $c={c} aria-label={c} />)}
      </Palette>
      <PaletteScroll>
        <ScrollCap $dim aria-label="Scroll palette"><Svg s={7}><path d="M5 0L1.500 3.500 5 7Z" fill="currentColor" /></Svg></ScrollCap>
        <Thumb $size="151px"><Svg s={8}><path d="M0.500 2V6M3.500 2V6M6.500 2V6" stroke="#b3b0ac" /></Svg></Thumb>
      </PaletteScroll>
      <StatusBar>
        <StyleInfo>
          <StyleName>Fill:</StyleName><StyleValue>N/A</StyleValue>
          <StyleName>Stroke:</StyleName><StyleValue>N/A</StyleValue>
        </StyleInfo>
        <SpinField id="o" label="O:" value="100" labelWidth="17px" width="36px" />
        <Separator $tall $narrow />
        <StatusIcon aria-label="Toggle layer visibility">
          <Svg s={14}><path d="M1 8C3 4 11 4 13 8 10 12 4 12 1 8Z" fill="#ddd" stroke="#222" /><circle cx="7" cy="7.500" r="2.500" fill="#111" /><path d="M2 5L1 3M4.500 4L4 1.500M7 3.500V1M9.500 4L10 1.500M12 5L13 3" stroke="#222" /></Svg>
        </StatusIcon>
        <StatusIcon aria-label="Toggle layer lock"><SmallLock /></StatusIcon>
        <SelectBox $w="144px" $h="26px" $dark>
          <LayerSelect aria-label="Layer" defaultValue="l"><option value="l">•BackgroundLayer</option></LayerSelect>
          <Caret w={8} />
        </SelectBox>
        <StatusText>No objects selected.</StatusText>
      </StatusBar>
    </EditorWindow>
  );
}

const ArrowShape = ({ dim, up }) => (
  <svg width="22" height="22" viewBox="0 0 22 22" aria-hidden="true">
    <path
      d="M7.500 2.500L0.500 9.500Q-.2 11 .5 12.500L7.500 19.500Q9 20.500 10.500 19 11.500 17.500 10 16L7.500 13.500H20Q21.500 13 21.500 11 21.500 9 20 8.500H7.500L10 6Q11.500 4.500 10.500 3 9 1.500 7.500 2.500Z"
      transform={up ? "rotate(90 11 11)" : dim ? "matrix(-1 0 0 1 22 0)" : undefined}
      fill={dim ? "#dedcd9" : "url(#orange)"} stroke={dim ? "#cbc8c5" : "#d9622b"} strokeLinejoin="round"
    />
  </svg>
);
const Magnifier = ({ plus, big }) => (
  <Svg s={big ? 24 : 16}>
    {big ? (
      <><circle cx="9" cy="9" r="6.500" stroke="#555" strokeWidth="1.800" /><path d="M14 14L22 21" stroke="#555" strokeWidth="3" /></>
    ) : (
      <><circle cx="6.500" cy="6.500" r="5.500" stroke="#4c4c4c" strokeWidth="1.800" /><path d="M10.500 10.500L15 15" stroke="#4c4c4c" strokeWidth="2.500" /><path d={plus ? "M3.500 6.500H9.500M6.500 3.500V9.500" : "M3.500 6.500H9.500"} stroke="#4c4c4c" strokeWidth="1.800" /></>
    )}
  </Svg>
);

function Files() {
  return (
    <FilesWindow aria-label="File browser">
      <WindowTitle active>Pilot_Light</WindowTitle>
      <MenuBar $inset="2px">
        {["File", "Edit", "View", "Go", "Bookmarks", "Help"].map((m) => <MenuItem key={m}>{m}</MenuItem>)}
      </MenuBar>
      <FilesBody>
        <FilesToolbar>
          <NavButton $w="70px"><ArrowShape />Back</NavButton>
          <DropButton aria-label="Back history"><Caret /></DropButton>
          <NavButton $w="94px" disabled><ArrowShape dim />Forward</NavButton>
          <DropButton aria-label="Forward history" disabled><Caret color="#b9b6b2" /></DropButton>
          <WideIconButton aria-label="Up"><ArrowShape up /></WideIconButton>
          <WideIconButton aria-label="Stop">
            <Svg s={22}><circle cx="11" cy="11" r="10.500" fill="#c5c2c0" stroke="#bbb8b5" /><path d="M7 7L15 15M15 7L7 15" stroke="#fff" strokeWidth="2.800" /></Svg>
          </WideIconButton>
          <WideIconButton aria-label="Reload">
            <Svg s={22}><path d="M17 16C13 20 4 19 3.500 11 4 3 12 2 16 6" stroke="#4d86c6" strokeWidth="4" /><path d="M20.500 1.500V10.500H11L13 8.500 15.500 8Z" fill="#6aa3dd" stroke="#4d86c6" /><path d="M16 16C12 19 4.500 18 3.500 11 4 4.500 11 2.500 16 6" stroke="#82b5e6" strokeWidth="1.500" /></Svg>
          </WideIconButton>
          <Separator $tall />
          <WideIconButton aria-label="Home">
            <Svg s={24}><path d="M12 1.500L15 4.500V2.500H18.500V8L23 12.500V14H20.500V22.500H3.500V14H1V12.500Z" fill="url(#orange)" stroke="#d5642f" /></Svg>
          </WideIconButton>
          <WideIconButton aria-label="Computer">
            <Svg s={24}><path d="M1.500 1.500H22.500V17.500H1.500Z" fill="#eee" stroke="#999" /><path d="M3 3H21V16H3Z" fill="url(#purple)" /><path d="M9 18H15V20H9Z" fill="#aaa" /><path d="M3 21.500C6 19.500 18 19.500 21 21.500V23H3Z" fill="#ccc" stroke="#888" /></Svg>
          </WideIconButton>
          <Separator $tall />
          <WideIconButton aria-label="Zoom out"><Magnifier /></WideIconButton>
          <ZoomValue>100%</ZoomValue>
          <WideIconButton aria-label="Zoom in"><Magnifier plus /></WideIconButton>
          <SelectBox $w="138px" $h="29px" $before="5px">
            <Select aria-label="View as" defaultValue="Icon View"><option>Icon View</option></Select>
            <Caret w={8} />
          </SelectBox>
          <SearchButton aria-label="Search"><Magnifier big /></SearchButton>
        </FilesToolbar>
        <IconPane>
          <FileItem><PilotLight shape="octagonal" /><FileName>pl_octagonal.svg</FileName></FileItem>
          <FileItem><PilotLight shape="round" hot /><FileName $on>pl_round.svg</FileName></FileItem>
          <FileItem><PilotLight shape="square" /><FileName>pl_square.svg</FileName></FileItem>
        </IconPane>
      </FilesBody>
    </FilesWindow>
  );
}

export default function App() {
  return (
    <>
      <Global />
      <Defs />
      <Desktop>
        <TopPanel>
          <svg width="800" height="4" viewBox="0 0 800 4" aria-hidden="true">
            <path d="M255 0H270L266 3H259Z" fill="#e2571b" />
            <path d="M300 0H315V2H303Z" fill="#ddd" />
            <path d="M360 0H373L370 3H364Z" fill="#3f6fae" />
            <path d="M424 0H441V2H424ZM493 0H513V2H493Z" fill="#ccc" />
            <path d="M462 0H478V3H462Z" fill="#8a8a88" />
            <path d="M631 0H645L641 3H635Z" fill="#3c78ab" />
            <path d="M670 0H692V3H672Z" fill="#d8451a" />
            <path d="M776 0H788L785 3H779Z" fill="#120f55" />
          </svg>
        </TopPanel>
        <Editor />
        <DraggedFile><PilotLight shape="round" hard /><FileName $on>pl_round.svg</FileName></DraggedFile>
        <Files />
        <Pointer width="14" height="20" viewBox="0 0 14 20" aria-hidden="true">
          <path d="M1 1V16L4.500 13 7 18.500 9.500 17.500 7 12H11.500Z" fill="#fff" stroke="#111" />
        </Pointer>
      </Desktop>
    </>
  );
}
